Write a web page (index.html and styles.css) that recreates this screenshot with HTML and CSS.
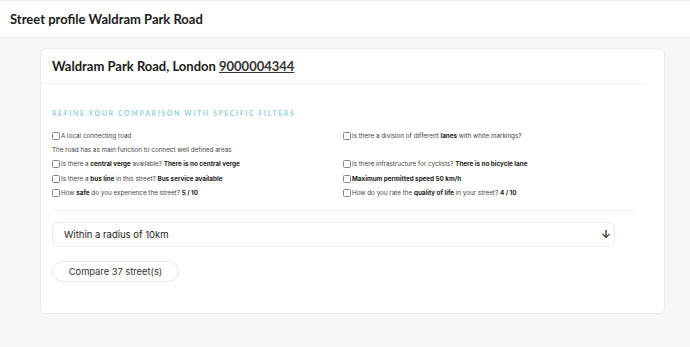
FILE: index.html
```html
<!DOCTYPE html>
<html>
  <head>
    <meta charset="utf-8">
    <title>Street profile Waldram Park Road</title>
    <link rel="stylesheet" href="styles.css">
  </head>
  <body>
    <header class="page-header">
      <h1>Street profile Waldram Park Road</h1>
    </header>

    <main class="page-body">
      <section class="card">
        <div class="card-header">
          <h2>Waldram Park Road, London <a href="#">9000004344</a></h2>
        </div>

        <div class="card-content">
          <h3 class="filters-title">Refine your comparison with specific filters</h3>

          <div class="filters">
            <div class="filter-col">
              <label class="filter"><span class="box"></span>A local connecting road</label>
              <p class="filter-note">The road has as main function to connect well defined areas</p>
              <label class="filter"><span class="box"></span>Is there a <b>central verge</b> available? <b>There is no central verge</b></label>
              <label class="filter"><span class="box"></span>Is there a <b>bus line</b> in this street? <b>Bus service available</b></label>
              <label class="filter"><span class="box"></span>How <b>safe</b> do you experience the street? <b>5 / 10</b></label>
            </div>
            <div class="filter-col">
              <label class="filter"><span class="box"></span>Is there a division of different <b>lanes</b> with white markings?</label>
              <p class="filter-note"></p>
              <label class="filter"><span class="box"></span>Is there infrastructure for cyclists? <b>There is no bicycle lane</b></label>
              <label class="filter"><span class="box"></span><b>Maximum permitted speed 50 km/h</b></label>
              <label class="filter"><span class="box"></span>How do you rate the <b>quality of life</b> in your street? <b>4 / 10</b></label>
            </div>
          </div>

          <hr class="divider">

          <div class="select">
            <span>Within a radius of 10km</span>
            <span class="select-arrow">&#8595;</span>
          </div>

          <button class="compare-btn">Compare 37 street(s)</button>
        </div>
      </section>
    </main>
  </body>
</html>
```

FILE: styles.css
```css
html, body { margin: 0; padding: 0; }
body {
  background: #f7f7f7;
  font-family: Inter, "Noto Sans", sans-serif;
  color: #222;
  height: 347px;
  overflow: hidden;
}

.page-header {
  background: #fff;
  border-top: 1px solid #eee;
  border-bottom: 1px solid #e6e6e6;
  height: 36px;
  padding: 0 10px;
  display: flex;
  align-items: center;
}
.page-header h1 {
  margin: 0;
  font-family: Lato, sans-serif;
  font-size: 13px;
  font-weight: 700;
  color: #1a1a1a;
}

.page-body { padding: 10px 25px 0 40px; }

.card {
  background: #fff;
  border: 1px solid #ececec;
  border-radius: 6px;
  height: 266px;
  box-sizing: border-box;
}

.card-header {
  margin-right: 19px;
  border-bottom: 1px solid #eee;
  height: 34px;
  padding: 0 11px;
  display: flex;
  align-items: center;
}
.card-header h2 {
  margin: 0;
  font-family: Lato, sans-serif;
  font-size: 13px;
  font-weight: 700;
  color: #1a1a1a;
}
.card-header a { color: #333; text-decoration: underline; text-decoration-thickness: 1px; }

.card-content { padding: 0 30px 0 11px; }

.filters-title {
  margin: 25px 0 12px;
  font-family: Lato, sans-serif;
  font-size: 7px;
  font-weight: 700;
  letter-spacing: 1.6px;
  text-transform: uppercase;
  color: #93d2d6;
}

.filters {
  display: grid;
  grid-template-columns: 291px 1fr;
}
.filter-col { display: flex; flex-direction: column; }
.filter, .filter-note {
  height: 14.2px;
  display: flex;
  align-items: center;
  font-size: 6.3px;
  color: #444;
  margin: 0;
  white-space: pre;
}
.filter b { color: #222; font-weight: 700; }
.box {
  width: 6px;
  height: 6px;
  border: 1px solid #888;
  border-radius: 1.5px;
  margin-right: 1px;
  flex: none;
}

.divider {
  border: 0;
  border-top: 1px solid #eee;
  margin: 10px 0 11px;
}

.select {
  margin-right: 19px;
  height: 23px;
  border: 1px solid #ececec;
  border-radius: 6px;
  display: flex;
  align-items: center;
  justify-content: space-between;
  padding: 0 3px 0 11px;
  font-size: 9.5px;
  color: #222;
}
.select-arrow { font-size: 11px; font-weight: 700; color: #333; }

.compare-btn {
  margin-top: 14px;
  width: 127px;
  height: 21px;
  border: 1px solid #e6e6e6;
  border-radius: 11px;
  background: #fff;
  font-family: Inter, sans-serif;
  font-size: 9.3px;
  color: #333;
}
```
